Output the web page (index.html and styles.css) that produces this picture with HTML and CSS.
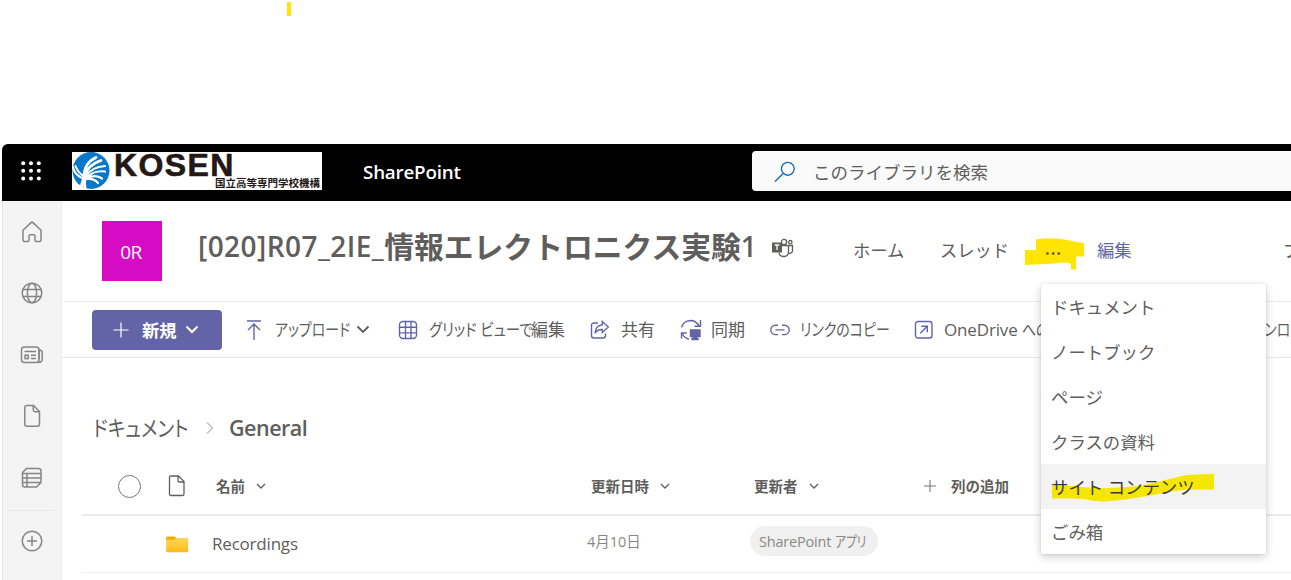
FILE: index.html
```html
<!DOCTYPE html>
<html lang="ja">
<head>
  <meta charset="UTF-8">
  <title>[020]R07_2IE_情報エレクトロニクス実験1 - SharePoint</title>
  <link rel="stylesheet" href="styles.css">
</head>
<body>
  <div class="marker-tick"></div>

  <div class="window">
    <!-- Top bar -->
    <header class="topbar">
      <svg class="waffle" width="20" height="20" viewBox="0 0 20 20" fill="#fff">
        <circle cx="2.2" cy="2.2" r="2"/><circle cx="10" cy="2.2" r="2"/><circle cx="17.8" cy="2.2" r="2"/>
        <circle cx="2.2" cy="9.8" r="2"/><circle cx="10" cy="9.8" r="2"/><circle cx="17.8" cy="9.8" r="2"/>
        <circle cx="2.2" cy="17.4" r="2"/><circle cx="10" cy="17.4" r="2"/><circle cx="17.8" cy="17.4" r="2"/>
      </svg>
      <div class="logo">
        <svg width="38" height="38" viewBox="0 0 38 38">
          <circle cx="19" cy="18.5" r="18.5" fill="#0877c8"/>
          <g fill="none" stroke="#fff" stroke-linecap="round">
            <path d="M1 15q1 7 9 11M3.500 14q2 6 8 10" stroke-width="2"/>
            <path d="M12 26Q10 31 9 36M13 26q-1 5 0 10" stroke-width="3"/>
            <path d="M12 25Q12 11 24 5.500M13 25Q15 13 29 8.500" stroke-width="2.800"/>
            <path d="M14 24Q20 15 33 14M15 25Q23 18 33 19.500M15 26q9-4 15 .5M15 27q7-1 11 4" stroke-width="2.200"/>
          </g>
        </svg>
        <div class="logo-text">
          <span class="logo-name">KOSEN</span>
          <span class="logo-sub">国立高等専門学校機構</span>
        </div>
      </div>
      <span class="app-name">SharePoint</span>
      <div class="search">
        <svg width="22" height="22" viewBox="0 0 22 22" fill="none" stroke="#0f6cbd" stroke-width="1.4">
          <circle cx="13.8" cy="7.8" r="6.4"/><path d="M9.2 12.4L1 20.6"/>
        </svg>
        <span>このライブラリを検索</span>
      </div>
    </header>

    <div class="body">
      <!-- App rail -->
      <nav class="rail">
        <a><svg width="22" height="22" viewBox="0 0 22 22"><path d="M2 9.3L10 1.6q1-.9 2 0l8 7.7v9.700q0 1.500-1.500 1.500h-3.200q-1.300 0-1.300-1.300v-4q0-1.500-1.500-1.500h-3q-1.500 0-1.500 1.500v4q0 1.300-1.300 1.300H3.500Q2 20.500 2 19z"/></svg></a>
        <a><svg width="22" height="22" viewBox="0 0 22 22"><circle cx="11" cy="11" r="9.800"/><ellipse cx="11" cy="11" rx="4.600" ry="9.800"/><path d="M2 7.500h18M2 14.500h18"/></svg></a>
        <a><svg width="24" height="20" viewBox="0 0 24 20"><rect x="1.500" y="2" width="17.500" height="15.500" rx="3"/><path d="M19 5q3.200 0 3.200 2.500V14q0 3.500-4 3.500M19 5v9M4.500 6.500h11.500M11 10.300h5M11 13.500h5"/><rect x="5" y="10.200" width="3.200" height="3.400"/></svg></a>
        <a><svg width="18" height="24" viewBox="0 0 18 24"><path d="M4 1.500h6.500L16.500 7.500V20q0 2.200-2.200 2.200H4Q1.800 22.200 1.800 20V3.700Q1.800 1.500 4 1.500zM10.300 1.500V6q0 1.700 1.700 1.700h4.500"/></svg></a>
        <a><svg width="22" height="22" viewBox="0 0 22 22"><path d="M5.500 1.500h12q2.500 0 2.500 2.500v11.500l-4.500 4.500H4q-2.500 0-2.500-2.500V5.500zM1.500 6.500H20M1.500 11H20M1.500 15.500H20M6 6.500V20"/></svg></a>
        <a class="rail-add"><svg width="22" height="22" viewBox="0 0 22 22"><circle cx="11" cy="11" r="9.800"/><path d="M11 6v10M6 11h10"/></svg></a>
      </nav>

      <main>
        <!-- Site header -->
        <section class="site-header">
          <div class="site-logo">0R</div>
          <h1><span class="title-latin">[020]R07_2IE_</span><span class="title-ja">情報エレクトロニクス実験</span><span class="title-last">1</span></h1>
          <svg class="teams" width="22" height="20" viewBox="0 0 22 20" fill="none" stroke="#605e5c" stroke-width="1.3">
            <circle cx="12" cy="4" r="2.600"/><circle cx="18.300" cy="4.200" r="1.700"/>
            <path d="M10 7.500h6.500V14q-.3 4.500-4.800 4.500Q7.500 18.500 7 14.500M16.500 7.500h4V13q-.4 2.600-4 2.600"/>
            <rect x="0" y="4.500" width="10" height="10" fill="#605e5c" stroke="none"/>
            <path d="M2.700 7h4.600M5 7v5" stroke="#fff"/>
          </svg>
          <nav class="site-nav">
            <a>ホーム</a>
            <a>スレッド</a>
            <a class="more">
              <svg width="60" height="34" viewBox="0 0 60 34">
                <path d="M0 12H11V1.200Q30-1 42 2q8 2 17 3V18.500H51V31.500H46V26Q42 23.500 30 25.500L0 27z" fill="#ffe500"/>
                <g fill="#4d4a20"><circle cx="22.500" cy="15.500" r="1.300"/><circle cx="28.200" cy="15.500" r="1.300"/><circle cx="33.800" cy="15.500" r="1.300"/></g>
              </svg>
            </a>
            <a class="edit">編集</a>
            <a class="privacy">プライベート</a>
          </nav>
        </section>

        <!-- Command bar -->
        <section class="commands">
          <button class="new">
            <svg width="16" height="16" viewBox="0 0 16 16"><path d="M8 .5v15M.5 8h15" stroke="#fff" stroke-width="1.2"/></svg>
            <span>新規</span>
            <svg width="14" height="9" viewBox="0 0 14 9" fill="none" stroke="#fff" stroke-width="2"><path d="M1.500 1.500L7 7l5.500-5.500"/></svg>
          </button>
          <a class="upload">
            <svg width="18" height="20" viewBox="0 0 18 20"><path d="M2 1h14M9 4v16M3 10l6-6 6 6"/></svg>
            <span class="label"><span class="kana">アップロード</span></span>
            <svg class="chev" width="14" height="9" viewBox="0 0 14 9"><path d="M1.500 1.500L7 7l5.500-5.500"/></svg>
          </a>
          <a class="grid-view">
            <svg width="20" height="20" viewBox="0 0 20 20"><rect x="1.500" y="1.500" width="17" height="17" rx="3.500"/><path d="M7.500 1.500v17M13 1.500v17M1.500 7.200h17M1.500 12.900h17"/></svg>
            <span class="label"><span class="kana">グリッド ビューで</span></span>
            <span>編集</span>
          </a>
          <a class="share">
            <svg width="20" height="20" viewBox="0 0 20 20"><path d="M8 3H4Q1.500 3 1.500 5.500V15.500Q1.500 18 4 18H13Q15.500 18 15.500 15.500V13.500M12.300 1.500l6 5.500-6 5.500V9.500Q7.500 9.200 5 13.200 5.500 5.500 12.300 4.700z"/></svg>
            <span>共有</span>
          </a>
          <a class="sync">
            <svg width="22" height="22" viewBox="0 0 22 22"><path d="M1.500 8.500Q3 2 10.500 1.500q5 0 8.500 5M20.500 1v6.200h-6M6.700 14H1.500v5.500M2 14.500q2.500 4.500 7 5.700"/><path d="M10.500 11h9.500v6.500h-3.500v2h1.500v1h-6v-1h1.500v-2h-3z" fill="#6264a7"/></svg>
            <span>同期</span>
          </a>
          <a class="link">
            <svg width="20" height="12" viewBox="0 0 20 12"><path d="M8 1.200H5.500a4.700 4.700 0 0 0 0 9.400H8M12 1.200h2.500a4.700 4.700 0 0 1 0 9.400H12M5.500 5.900h9"/></svg>
            <span class="kana">リンクのコピー</span>
          </a>
          <a class="onedrive">
            <svg width="20" height="20" viewBox="0 0 20 20"><rect x="1.500" y="1.500" width="16.500" height="16.500" rx="2.500"/><path d="M6.300 13.200l6.700-6.700M7.300 6.200h6v6"/></svg>
            <span>OneDrive <span class="kana">へのショートカット</span></span>
          </a>
          <a class="download">
            <span class="kana">ダウンロード</span>
          </a>
        </section>

        <!-- Breadcrumb -->
        <div class="breadcrumb">
          <a><span class="kana">ドキュメント</span></a>
          <svg width="8" height="12" viewBox="0 0 8 12" fill="none" stroke="#8a8886"><path d="M1 .5L6.500 6 1 11.500"/></svg>
          <b>General</b>
        </div>

        <!-- File list -->
        <div class="list">
          <div class="row head">
            <i class="round"></i>
            <svg class="doc" width="18" height="22" viewBox="0 0 18 22"><path d="M3 1h7.500l5.500 5.500V19q0 1.500-1.500 1.500H3Q1.500 20.500 1.500 19V2.500Q1.500 1 3 1zM10 1v4.500Q10 7 11.500 7H16"/></svg>
            <span>名前<svg class="sort" width="10" height="6" viewBox="0 0 10 6"><path d="M1 1l4 4 4-4"/></svg></span>
            <span>更新日時<svg class="sort" width="10" height="6" viewBox="0 0 10 6"><path d="M1 1l4 4 4-4"/></svg></span>
            <span>更新者<svg class="sort" width="10" height="6" viewBox="0 0 10 6"><path d="M1 1l4 4 4-4"/></svg></span>
            <span class="add-col"><svg width="14" height="14" viewBox="0 0 14 14"><path d="M7 1v12M1 7h12" stroke="#777" stroke-width="1.1"/></svg>列の追加</span>
          </div>
          <div class="row item">
            <i></i>
            <svg class="folder" width="23" height="17" viewBox="0 0 24 18">
              <defs><linearGradient id="fold" x2="0" y2="1"><stop offset="0" stop-color="#ffd85a"/><stop offset="1" stop-color="#ffb91a"/></linearGradient></defs>
              <path d="M0 1.500Q0 .5 1 .5h8l2 2v3H0z" fill="#f2ad00"/>
              <path d="M0 4h8.500l2-2H22q1.300 0 1.300 1.300V16q0 1.300-1.300 1.300H1.300Q0 17.300 0 16z" fill="url(#fold)"/>
            </svg>
            <a class="file-name">Recordings</a>
            <span class="date">4月10日</span>
            <span class="person">SharePoint <span class="kana">アプリ</span></span>
          </div>
        </div>
      </main>
    </div>
  </div>

  <!-- Overflow menu of the site navigation -->
  <div class="menu">
    <a>ドキュメント</a>
    <a>ノートブック</a>
    <a>ページ</a>
    <a>クラスの資料</a>
    <a class="active">
      <svg class="stroke" width="162" height="30" viewBox="0 0 162 30"><path d="M0 13Q18 12 30 14Q60 17 92 12Q118 6 132 2.500Q142 1 162 1V16.500H147Q128 16 112 20Q76 27 52 28.500Q40 28 32 26Q15 25 0 25.500z" fill="#f5e600"/></svg>
      <span>サイト コンテンツ</span>
    </a>
    <a>ごみ箱</a>
  </div>
</body>
</html>
```
FILE: styles.css
```css
* {
  box-sizing: border-box;
}
body {
  margin: 0;
  height: 580px;
  overflow: hidden;
  background: #fff;
  color: #605e5c;
  font-family: "Open Sans", "Noto Sans CJK JP", sans-serif;
  font-size: 17px;
  line-height: 24px;
}
svg {
  display: block;
  flex: none;
}
/* condensed katakana, as in the UI font */
.kana {
  display: inline-block;
  transform: scaleX(.82);
  transform-origin: left;
  font-feature-settings: "palt";
  white-space: nowrap;
}
.marker-tick {
  width: 4px;
  height: 14px;
  margin: 2px 0 128px 287px;
  background: #ffe500;
}
.window {
  margin-left: 2px;
}

/* top bar */
.topbar {
  display: flex;
  align-items: center;
  width: 1289px;
  height: 57px;
  overflow: hidden;
  background: #000;
  border-top-left-radius: 6px;
}
.waffle {
  margin: -4px 31px 0 19px;
}
.logo {
  display: flex;
  flex: none;
  width: 250px;
  height: 38px;
  margin-top: -3px;
  background: #fff;
  color: #231815;
}
.logo-text {
  display: flex;
  flex-direction: column;
  flex: 1;
}
.logo-name {
  height: 25px;
  margin-left: 4px;
  font-family: "Liberation Sans", sans-serif;
  font-weight: bold;
  font-size: 32px;
  line-height: 27px;
  letter-spacing: 1.4px;
  -webkit-text-stroke: .6px #231815;
  white-space: nowrap;
}
.logo-sub {
  padding-right: 2px;
  font-size: 10.5px;
  font-weight: bold;
  line-height: 12px;
  text-align: right;
  white-space: nowrap;
}
.app-name {
  flex: none;
  width: 389px;
  margin: -2px 0 0 41px;
  color: #fff;
  font-size: 18.8px;
  font-weight: 600;
  letter-spacing: -.2px;
}
.search {
  display: flex;
  align-items: center;
  gap: 17px;
  width: 560px;
  height: 40px;
  flex: none;
  padding: 2px 0 0 22px;
  margin-top: -3px;
  background: #fafafa;
  border-radius: 4px;
  font-size: 17.5px;
}

/* rail */
.body {
  display: flex;
}
.rail {
  width: 60px;
  height: 379px;
  flex: none;
  padding-right: 1px;
  background: #f4f4f4;
  border-left: 1px solid #e6e6e6;
  border-right: 1px solid #ececec;
}
.rail a {
  display: flex;
  align-items: center;
  justify-content: center;
  height: 61.5px;
}
.rail svg {
  fill: none;
  stroke: #858585;
  stroke-width: 1.5;
}
.rail .rail-add {
  margin: 1.5px 5px 0;
  border-top: 1px solid #e9e9e9;
}
main {
  width: 1229px;
  flex: none;
  overflow: hidden;
}

/* site header */
.site-header {
  display: flex;
  height: 101px;
  padding: 20px 0 0 40px;
  border-bottom: 1px solid #ebebeb;
}
.site-logo {
  width: 60px;
  height: 60px;
  flex: none;
  padding-right: 2px;
  background: #d60cc5;
  color: #fff;
  font-size: 19px;
  letter-spacing: -.5px;
  line-height: 63px;
  text-align: center;
}
h1 {
  display: flex;
  flex: none;
  width: 559px;
  margin: 4px 0 0 36px;
  font-size: 28px;
  font-weight: 600;
  line-height: 42px;
  white-space: nowrap;
}
.title-latin {
  letter-spacing: .45px;
}
.title-ja {
  margin-top: -1px;
  font-family: "Noto Sans CJK JP", sans-serif;
  font-weight: bold;
  font-size: 29.8px;
}
.title-last {
  margin-left: 0;
}
.teams {
  margin: 17px 0 0 15px;
}
.site-nav {
  display: grid;
  grid-template-columns: 87px 85px 72px 186px 80px;
  margin: 18px 0 0 59px;
  font-size: 17.3px;
  white-space: nowrap;
}
.more svg {
  margin-top: -1px;
}
.edit {
  color: #6264a7;
}

/* command bar */
.commands {
  display: grid;
  grid-template-columns: 153px 153px 192px 90px 90px 144px 325px 120px;
  align-items: center;
  height: 56px;
  padding-left: 30px;
  border-bottom: 1px solid #e6e6e6;
}
.commands a {
  display: flex;
  align-items: center;
  gap: 11px;
  white-space: nowrap;
}
.commands a svg {
  fill: none;
  stroke: #6264a7;
  stroke-width: 1.4;
}
.commands .label {
  width: 74px;
}
.commands .grid-view .label {
  width: 91px;
}
.commands .grid-view .kana {
  transform: scaleX(.85);
}
.commands .upload {
  gap: 12px;
}
.commands .upload .chev {
  margin-left: -5px;
  stroke: #605e5c;
  stroke-width: 1.8;
}
.commands .link {
  gap: 10px;
}
.commands .sync {
  gap: 9px;
}
.commands .onedrive {
  gap: 10px;
  letter-spacing: -.15px;
}
.new {
  display: flex;
  align-items: center;
  gap: 8px;
  width: 130px;
  height: 40px;
  padding: 0 0 0 21px;
  border: 0;
  border-radius: 4px;
  background: #6264a7;
  color: #fff;
  font: bold 17.3px "Noto Sans CJK JP", sans-serif;
}
.new span {
  margin-left: 5px;
}

/* breadcrumb */
.breadcrumb {
  display: flex;
  align-items: center;
  height: 36px;
  margin: 52px 0 0 31px;
  font-size: 21.5px;
}
.breadcrumb a {
  width: 113px;
}
.breadcrumb .kana {
  transform: scaleX(.87);
}
.breadcrumb b {
  margin-left: 15px;
  font-weight: 600;
  letter-spacing: -.5px;
}

/* list */
.list {
  margin-left: 20px;
}
.row {
  display: grid;
  grid-template-columns: 83px 51px 375px 163px 169px 1fr;
  align-items: center;
}
.head {
  height: 70px;
  padding-top: 12px;
  border-bottom: 2px solid #ebebeb;
  font-size: 14.5px;
  font-weight: 600;
  font-family: "Noto Sans CJK JP", sans-serif;
}
.head span {
  display: flex;
  align-items: center;
}
.round {
  width: 23px;
  height: 23px;
  margin-left: 36px;
  border: 1px solid #777;
  border-radius: 50%;
}
.doc {
  margin-left: 3px;
  fill: none;
  stroke: #605e5c;
  stroke-width: 1.3;
}
.sort {
  margin-left: 11px;
  fill: none;
  stroke: #605e5c;
  stroke-width: 1.3;
}
.add-col {
  gap: 14px;
}
.item {
  height: 57px;
  border-bottom: 1px solid #f0f0f0;
}
.folder {
  margin-left: 1px;
}
.file-name {
  margin-left: -4px;
  letter-spacing: -.2px;
}
.date {
  margin: -4px 0 0 -4px;
  color: #8a8886;
  font-size: 14.5px;
}
.person {
  display: block;
  width: 128px;
  height: 30px;
  margin: -6px 0 0 -4px;
  padding-left: 9px;
  border-radius: 15px;
  background: #f0f0f0;
  color: #8a8886;
  font-size: 14.5px;
  letter-spacing: -.2px;
  line-height: 31px;
  white-space: nowrap;
}

/* menu */
.menu {
  position: absolute;
  left: 1041px;
  top: 284px;
  width: 225px;
  background: #fff;
  border-radius: 2px;
  box-shadow: 0 3px 8px rgba(0, 0, 0, .2), 0 0 2px rgba(0, 0, 0, .12);
  font-size: 17.4px;
}
.menu a {
  display: block;
  position: relative;
  height: 45px;
  padding-left: 10px;
  line-height: 46px;
}
.menu .active {
  background: #f3f3f3;
  color: #3b3a39;
}
.menu .active span {
  position: relative;
}
.stroke {
  position: absolute;
  left: 11px;
  top: 9px;
}
```
